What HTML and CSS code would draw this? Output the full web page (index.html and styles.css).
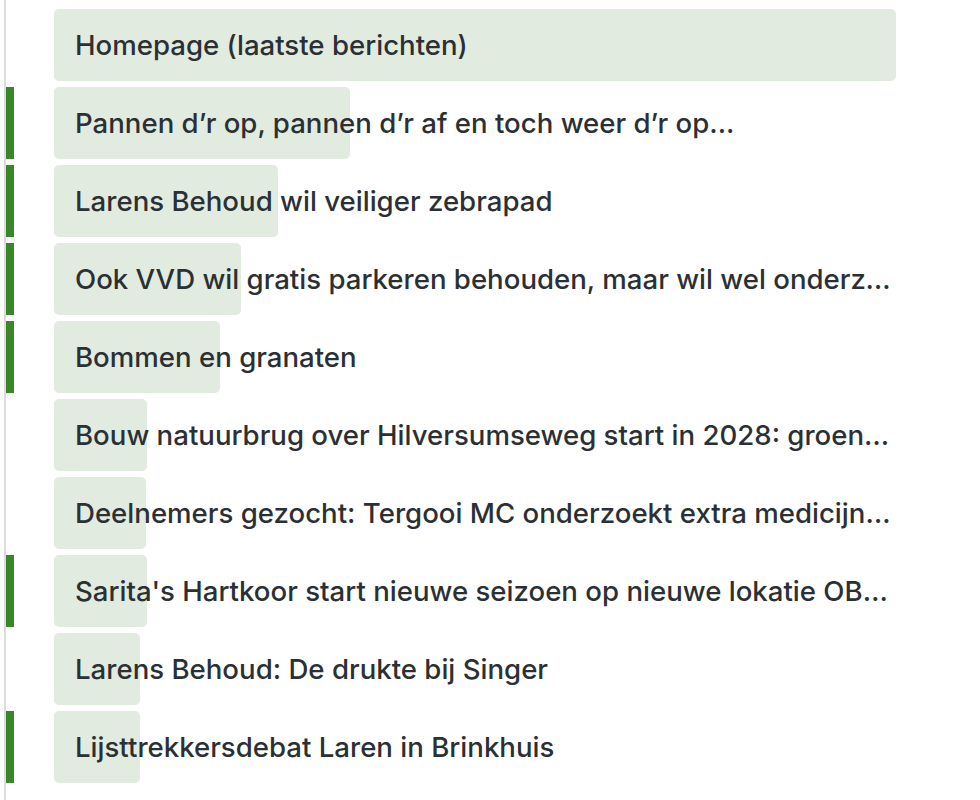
FILE: index.html
```html
<!DOCTYPE html>
<html>
<head>
    <link rel="stylesheet" href="styles.css">
</head>
<body>
    <nav class="menu">
        <ul class="items">
            <li class="item">
                <span class="marker"></span>
                <a class="link" href="#"><span class="fill" style="width: 100%"></span><span class="label">Homepage (laatste berichten)</span></a>
            </li>
            <li class="item active">
                <span class="marker"></span>
                <a class="link" href="#"><span class="fill" style="width: 296px"></span><span class="label">Pannen d’r op, pannen d’r af en toch weer d’r op...</span></a>
            </li>
            <li class="item active">
                <span class="marker"></span>
                <a class="link" href="#"><span class="fill" style="width: 224px"></span><span class="label">Larens Behoud wil veiliger zebrapad</span></a>
            </li>
            <li class="item active">
                <span class="marker"></span>
                <a class="link" href="#"><span class="fill" style="width: 187px"></span><span class="label">Ook VVD wil gratis parkeren behouden, maar wil wel onderzoek naar betaald parkeren</span></a>
            </li>
            <li class="item active">
                <span class="marker"></span>
                <a class="link" href="#"><span class="fill" style="width: 166px"></span><span class="label">Bommen en granaten</span></a>
            </li>
            <li class="item">
                <span class="marker"></span>
                <a class="link" href="#"><span class="fill" style="width: 93px"></span><span class="label">Bouw natuurbrug over Hilversumseweg start in 2028: groen licht van de provincie</span></a>
            </li>
            <li class="item">
                <span class="marker"></span>
                <a class="link" href="#"><span class="fill" style="width: 92px"></span><span class="label">Deelnemers gezocht: Tergooi MC onderzoekt extra medicijn bij hartfalen</span></a>
            </li>
            <li class="item active">
                <span class="marker"></span>
                <a class="link" href="#"><span class="fill" style="width: 93px"></span><span class="label">Sarita's Hartkoor start nieuwe seizoen op nieuwe lokatie OBS De Zevensprong</span></a>
            </li>
            <li class="item">
                <span class="marker"></span>
                <a class="link" href="#"><span class="fill" style="width: 86px"></span><span class="label">Larens Behoud: De drukte bij Singer</span></a>
            </li>
            <li class="item active">
                <span class="marker"></span>
                <a class="link" href="#"><span class="fill" style="width: 86px"></span><span class="label">Lijsttrekkersdebat Laren in Brinkhuis</span></a>
            </li>
        </ul>
    </nav>
</body>
</html>
```

FILE: styles.css
```css
* {
    margin: 0;
    padding: 0;
    box-sizing: border-box;
}

body {
    font-family: Inter, "Noto Sans", sans-serif;
    background: #fff;
    color: #2b3035;
}

.menu {
    margin-left: 4px;
    min-height: 100vh;
    border-left: 2px solid #dcdcdc;
    padding-top: 9px;
}

.items {
    list-style: none;
    display: flex;
    flex-direction: column;
    gap: 6px;
}

.item {
    display: flex;
    height: 72px;
}

.marker {
    width: 8px;
    flex-shrink: 0;
}

.item.active .marker {
    background: #3a862a;
}

.link {
    position: relative;
    display: flex;
    align-items: center;
    width: 842px;
    margin-left: 40px;
    padding: 0 2px 0 21px;
    text-decoration: none;
    color: inherit;
    font-size: 27.6px;
    font-weight: 500;
}

.fill {
    position: absolute;
    top: 0;
    left: 0;
    bottom: 0;
    background: #e2ebdf;
    border-radius: 5px;
}

.label {
    position: relative;
    white-space: nowrap;
    overflow: hidden;
    text-overflow: ellipsis;
}
```
